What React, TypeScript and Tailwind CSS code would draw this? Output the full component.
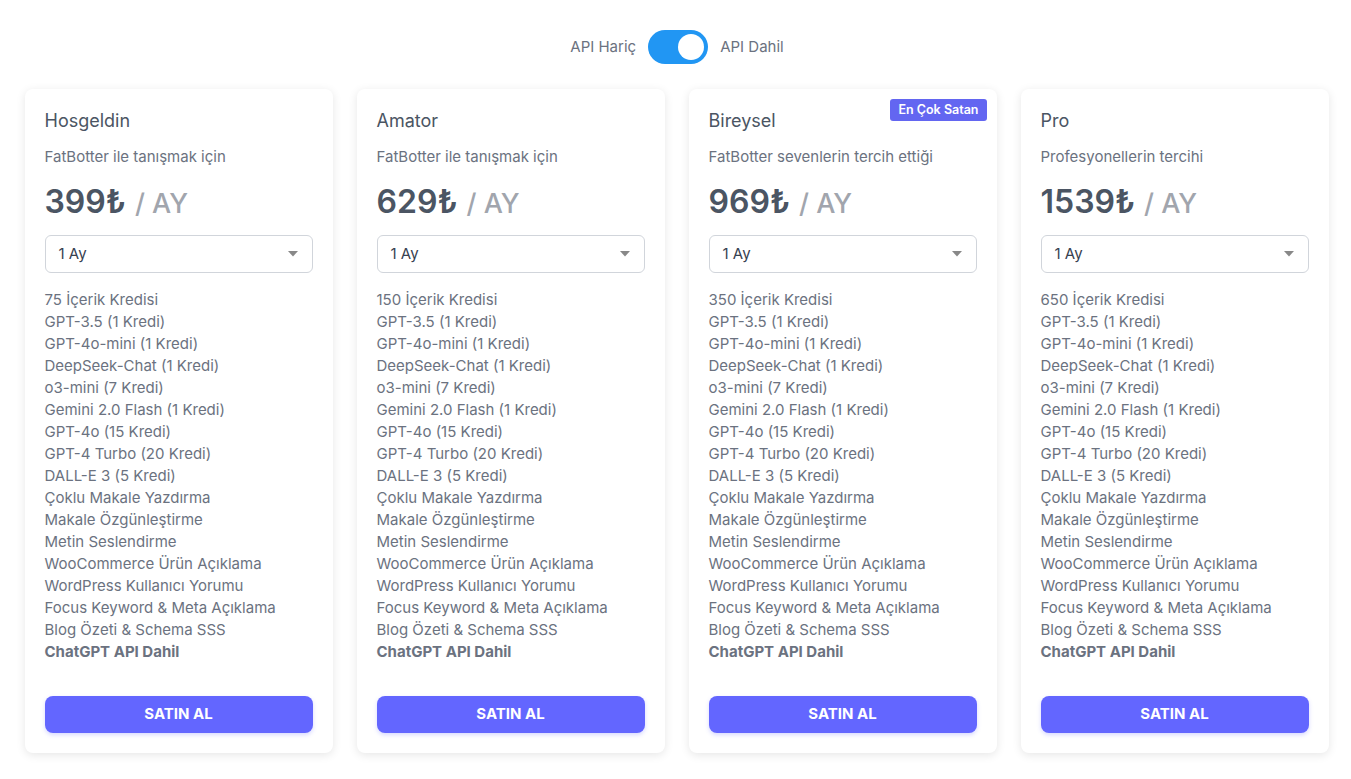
import * as React from "react";

// Pricing cards — monthly plans with API toggle

type Plan = {
  name: string;
  desc: string;
  price: string;
  credits: number;
  badge?: string;
};

const PLANS: Plan[] = [
  { name: "Hosgeldin", desc: "FatBotter ile tanışmak için", price: "399₺", credits: 75 },
  { name: "Amator", desc: "FatBotter ile tanışmak için", price: "629₺", credits: 150 },
  { name: "Bireysel", desc: "FatBotter sevenlerin tercih ettiği", price: "969₺", credits: 350, badge: "En Çok Satan" },
  { name: "Pro", desc: "Profesyonellerin tercihi", price: "1539₺", credits: 650 },
];

const FEATURES = [
  "GPT-3.5 (1 Kredi)",
  "GPT-4o-mini (1 Kredi)",
  "DeepSeek-Chat (1 Kredi)",
  "o3-mini (7 Kredi)",
  "Gemini 2.0 Flash (1 Kredi)",
  "GPT-4o (15 Kredi)",
  "GPT-4 Turbo (20 Kredi)",
  "DALL-E 3 (5 Kredi)",
  "Çoklu Makale Yazdırma",
  "Makale Özgünleştirme",
  "Metin Seslendirme",
  "WooCommerce Ürün Açıklama",
  "WordPress Kullanıcı Yorumu",
  "Focus Keyword & Meta Açıklama",
  "Blog Özeti & Schema SSS",
];

function Toggle({ on, onChange }: { on: boolean; onChange: () => void }) {
  return (
    <button
      onClick={onChange}
      className={
        "flex h-[34px] w-[60px] items-center rounded-full px-1 transition-colors " +
        (on ? "justify-end bg-[#2196f3]" : "justify-start bg-[#ccc]")
      }
    >
      <span className="h-[26px] w-[26px] rounded-full bg-white" />
    </button>
  );
}

function PlanCard({ plan, api }: { plan: Plan; api: boolean }) {
  return (
    <div className="relative flex w-[308px] flex-col rounded-lg bg-white px-5 pt-5 pb-5 shadow-[0_2px_10px_rgba(0,0,0,0.1)]">
      {plan.badge && (
        <span className="absolute top-[10px] right-[10px] rounded-[3px] bg-[#6366f1] px-2 py-[3px] text-[12.5px] leading-4 font-semibold text-white">
          {plan.badge}
        </span>
      )}
      <h3 className="text-[18px] leading-6 text-[#4b5563]">{plan.name}</h3>
      <p className="mt-[14px] text-[15px] leading-5 text-[#6b7280]">{plan.desc}</p>
      <div className="mt-[17px] flex items-baseline text-[32px] leading-9">
        <span className="font-semibold text-[#4b5563]">{plan.price}</span>
        <span className="ml-[9px] text-[27px] font-medium text-[#a1a5ad]">/ AY</span>
      </div>
      <div className="mt-[13px] flex h-[38px] items-center justify-between rounded-md border border-[#d1d5db] px-[13px] text-[15px] text-[#374151]">
        <span>1 Ay</span>
        <svg width="10" height="6" viewBox="0 0 10 6" className="mr-[1px]">
          <path d="M0 0h10L5 5.5z" fill="#888" />
        </svg>
      </div>
      <ul className="mt-[16px] text-[15px] leading-[22px] text-[#6b7280]">
        <li>{plan.credits} İçerik Kredisi</li>
        {FEATURES.map((f) => (
          <li key={f}>{f}</li>
        ))}
        <li className="font-bold">{api ? "ChatGPT API Dahil" : "ChatGPT API Hariç"}</li>
      </ul>
      <button className="mt-[33px] h-[37px] w-full rounded-lg bg-[#6366ff] text-[15px] font-bold text-white shadow-[0_2px_4px_rgba(99,102,255,0.25)]">
        SATIN AL
      </button>
    </div>
  );
}

export default function App() {
  const [api, setApi] = React.useState(true);
  return (
    <div className="min-h-screen bg-white font-['Inter',sans-serif]">
      <div className="flex items-center justify-center gap-3 pt-[30px] pl-[3px] text-[15px] text-[#6b7280]">
        <span>API Hariç</span>
        <Toggle on={api} onChange={() => setApi(!api)} />
        <span>API Dahil</span>
      </div>
      <div className="mt-[25px] flex justify-center gap-6 pl-[2px]">
        {PLANS.map((p) => (
          <PlanCard key={p.name} plan={p} api={api} />
        ))}
      </div>
    </div>
  );
}
